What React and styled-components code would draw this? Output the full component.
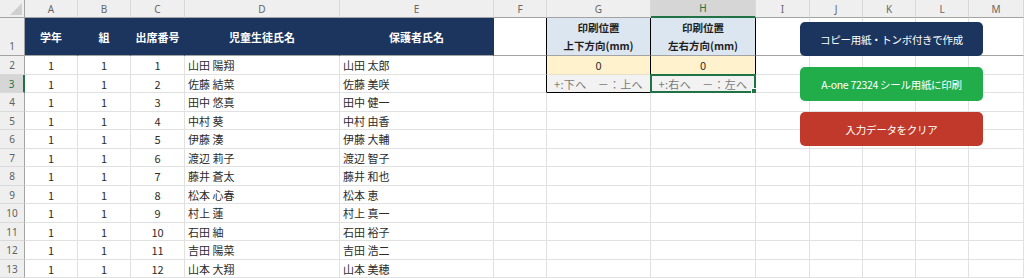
import React from "react";
import styled, { createGlobalStyle } from "styled-components";

const GRID = "#e1e1e1";
const FREEZE = "#a3a3a3";
const NAVY = "#1c355e";

const COL_WIDTHS = [25, 53, 53, 54, 155, 154, 53, 104, 105, 54, 53, 53, 53, 55];
const ROW_HEIGHTS = [18, 38, 19, 18, 19, 18, 19, 18, 19, 18, 19, 18, 19, 18];
const LETTERS = ["A", "B", "C", "D", "E", "F", "G", "H", "I", "J", "K", "L", "M"];

const students = [
  ["山田 陽翔", "山田 太郎"],
  ["佐藤 結菜", "佐藤 美咲"],
  ["田中 悠真", "田中 健一"],
  ["中村 葵", "中村 由香"],
  ["伊藤 湊", "伊藤 大輔"],
  ["渡辺 莉子", "渡辺 智子"],
  ["藤井 蒼太", "藤井 和也"],
  ["松本 心春", "松本 恵"],
  ["村上 蓮", "村上 真一"],
  ["石田 紬", "石田 裕子"],
  ["吉田 陽菜", "吉田 浩二"],
  ["山本 大翔", "山本 美穂"],
];

const GlobalStyle = createGlobalStyle`
  html, body {
    margin: 0;
    padding: 0;
    background: #fff;
    overflow: hidden;
  }
  body {
    font-family: "Noto Sans CJK JP", "Noto Sans", sans-serif;
  }
`;

const Sheet = styled.div`
  position: relative;
  display: grid;
  grid-template-columns: ${COL_WIDTHS.map((w) => `${w}px`).join(" ")};
  grid-template-rows: ${ROW_HEIGHTS.map((h) => `${h}px`).join(" ")};
  width: 1024px;
  height: 278px;
  overflow: hidden;
`;

const Corner = styled.div`
  position: relative;
  background: #efefef;
  border-right: 1px solid ${FREEZE};
  border-bottom: 1px solid ${FREEZE};
  box-sizing: border-box;

  svg {
    position: absolute;
    right: 2px;
    bottom: 2px;
  }
`;

const ColHead = styled.div`
  display: flex;
  align-items: center;
  justify-content: center;
  box-sizing: border-box;
  background: ${(p) => (p.$active ? "#d6d6d6" : "#efefef")};
  color: ${(p) => (p.$active ? "#217346" : "#666")};
  font-family: "Noto Sans", sans-serif;
  font-size: 10px;
  border-right: 1px solid #d9d9d9;
  border-bottom: ${(p) => (p.$active ? "2px solid #217346" : `1px solid ${FREEZE}`)};
`;

const RowHead = styled.div`
  display: flex;
  align-items: ${(p) => (p.$tall ? "flex-end" : "center")};
  justify-content: center;
  padding-bottom: ${(p) => (p.$tall ? "2px" : "0")};
  box-sizing: border-box;
  background: ${(p) => (p.$active ? "#d6d6d6" : "#efefef")};
  color: ${(p) => (p.$active ? "#217346" : "#616161")};
  font-family: "Noto Sans", sans-serif;
  font-size: 10px;
  border-right: ${(p) => (p.$active ? "2px solid #217346" : `1px solid ${FREEZE}`)};
  border-bottom: 1px solid ${(p) => (p.$frozen ? FREEZE : "#d9d9d9")};
`;

const Cell = styled.div`
  position: relative;
  display: flex;
  align-items: center;
  justify-content: ${(p) => p.$align || "center"};
  padding: 0 3px;
  box-sizing: border-box;
  background: #fff;
  color: #2b2b2b;
  font-size: 11px;
  white-space: nowrap;
  border-right: 1px solid ${(p) => p.$rb || GRID};
  border-bottom: 1px solid ${(p) => p.$bb || GRID};
`;

const TitleCell = styled(Cell)`
  background: ${NAVY};
  color: #fff;
  font-weight: 700;
  border-right-color: ${NAVY};
  border-bottom-color: ${FREEZE};
`;

const SettingHead = styled(Cell)`
  flex-direction: column;
  justify-content: center;
  gap: 2px;
  background: #dce6f1;
  color: #1e1e1e;
  font-size: 10.5px;
  font-weight: 700;
  line-height: 16px;
  border-right-color: #000;
  border-bottom-color: ${FREEZE};
`;

const InputCell = styled(Cell)`
  background: #fff2cc;
  border-right-color: #000;
  border-bottom-color: #e8dfc4;
`;

const HintCell = styled(Cell)`
  background: #f2f2f2;
  color: #7a7a7a;
  font-size: 11px;
  letter-spacing: 0.3px;
  border-right-color: #000;
  border-bottom-color: #000;
`;

const Selection = styled.div`
  position: absolute;
  left: -1px;
  top: -1px;
  right: -1px;
  bottom: -1px;
  border: 2px solid #217346;
  pointer-events: none;

  &::after {
    content: "";
    position: absolute;
    right: -4px;
    bottom: -4px;
    width: 5px;
    height: 5px;
    background: #217346;
    border: 1px solid #fff;
  }
`;

const ButtonStack = styled.div`
  position: absolute;
  left: 800px;
  top: 22px;
  display: flex;
  flex-direction: column;
  gap: 11px;
`;

const MacroButton = styled.div`
  display: flex;
  align-items: center;
  justify-content: center;
  width: 183px;
  height: 34px;
  border-radius: 5px;
  background: ${(p) => p.$color};
  color: #fff;
  font-size: 10.5px;
  letter-spacing: -0.3px;
`;

function CornerCell() {
  return (
    <Corner>
      <svg width="12" height="12" viewBox="0 0 12 12">
        <polygon points="12,0 12,12 0,12" fill="#cfcfcf" />
      </svg>
    </Corner>
  );
}

function emptyCells(row, from) {
  return LETTERS.slice(from).map((l) => (
    <Cell key={`${l}${row}`} $bb={row === 1 ? FREEZE : undefined} />
  ));
}

export default function App() {
  return (
    <>
      <GlobalStyle />
      <Sheet>
        <CornerCell />
        {LETTERS.map((l) => (
          <ColHead key={l} $active={l === "H"}>
            {l}
          </ColHead>
        ))}

        <RowHead $tall $frozen>1</RowHead>
        <TitleCell>学年</TitleCell>
        <TitleCell>組</TitleCell>
        <TitleCell>出席番号</TitleCell>
        <TitleCell>児童生徒氏名</TitleCell>
        <TitleCell>保護者氏名</TitleCell>
        <Cell $rb="#000" $bb={FREEZE} />
        <SettingHead>
          <span>印刷位置</span>
          <span>上下方向(mm)</span>
        </SettingHead>
        <SettingHead>
          <span>印刷位置</span>
          <span>左右方向(mm)</span>
        </SettingHead>
        {emptyCells(1, 8)}

        {students.map(([child, parent], i) => {
          const row = i + 2;
          return (
            <React.Fragment key={row}>
              <RowHead $active={row === 3}>{row}</RowHead>
              <Cell>1</Cell>
              <Cell>1</Cell>
              <Cell>{i + 1}</Cell>
              <Cell $align="flex-start">{child}</Cell>
              <Cell $align="flex-start">{parent}</Cell>
              <Cell $rb={row <= 3 ? "#000" : undefined} />
              {row === 2 && (
                <>
                  <InputCell>0</InputCell>
                  <InputCell>0</InputCell>
                </>
              )}
              {row === 3 && (
                <>
                  <HintCell>+:下へ　－：上へ</HintCell>
                  <HintCell>
                    +:右へ　－：左へ
                    <Selection />
                  </HintCell>
                </>
              )}
              {row > 3 && (
                <>
                  <Cell />
                  <Cell />
                </>
              )}
              {emptyCells(row, 8)}
            </React.Fragment>
          );
        })}

        <ButtonStack>
          <MacroButton $color={NAVY}>コピー用紙・トンボ付きで作成</MacroButton>
          <MacroButton $color="#22ad4b">A-one 72324 シール用紙に印刷</MacroButton>
          <MacroButton $color="#c0392b">入力データをクリア</MacroButton>
        </ButtonStack>
      </Sheet>
    </>
  );
}
